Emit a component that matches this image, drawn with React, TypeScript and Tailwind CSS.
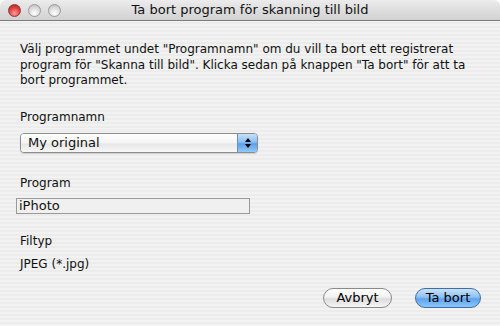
import React from 'react'

const font = { fontFamily: '"DejaVu Sans", "Liberation Sans", sans-serif' }

function Light({ red }: { red?: boolean }) {
  return (
    <span
      className={`w-[13px] h-[13px] rounded-full border ${
        red
          ? 'border-[#8a3a3a] bg-[radial-gradient(circle_at_50%_75%,#ff9a9a_0%,#e0403f_55%,#a31c1c_100%)]'
          : 'border-[#9a9a9a] bg-[radial-gradient(circle_at_50%_75%,#ffffff_0%,#dcdcdc_55%,#b4b4b4_100%)]'
      }`}
    />
  )
}

function AquaButton({ label, primary }: { label: string; primary?: boolean }) {
  return (
    <button
      className={`h-[20px] rounded-full border text-[13px] leading-none text-black flex items-center justify-center ${
        primary
          ? 'w-[66px] border-[#3f6da8] bg-[linear-gradient(#c8e2fb_0%,#8fc1f5_45%,#5fa2ec_55%,#8cc6fb_100%)]'
          : 'w-[69px] border-[#8a8a8a] bg-[linear-gradient(#ffffff_0%,#f2f2f2_45%,#dcdcdc_55%,#f6f6f6_100%)]'
      }`}
    >
      {label}
    </button>
  )
}

export default function App() {
  return (
    <div className="w-[500px] h-[326px] bg-white text-black overflow-hidden" style={font}>
      <div className="w-full h-full flex flex-col rounded-t-[6px] overflow-hidden">
        {/* Title bar */}
        <div className="relative h-[21px] flex items-center px-[8px] bg-[linear-gradient(#ececec_0%,#dedede_50%,#d2d2d2_100%)] border-b border-[#7a7a7a]">
          <div className="flex items-center gap-[7px]">
            <Light red />
            <Light />
            <Light />
          </div>
          <div className="absolute inset-0 flex items-center justify-center text-[13px] text-[#111]">
            Ta bort program för skanning till bild
          </div>
        </div>

        {/* Body */}
        <div className="flex-1 flex flex-col bg-[repeating-linear-gradient(180deg,#ececec_0px,#ececec_2px,#f2f2f2_2px,#f2f2f2_4px)] border-t border-[#f4f4f4] px-[20px] text-[12px] text-[#111]">
          <p className="mt-[20px] leading-[15.5px] w-[455px]">
            Välj programmet undet "Programnamn" om du vill ta bort ett registrerat program för "Skanna till bild". Klicka sedan på knappen "Ta bort" för att ta bort programmet.
          </p>

          <div className="mt-[21px] leading-[15px]">Programnamn</div>
          <div className="mt-[8px] w-[238px] h-[20px] flex rounded-[4px] border border-[#8c8c8c] overflow-hidden shadow-[0_1px_1px_rgba(0,0,0,0.15)]">
            <div className="flex-1 flex items-center pl-[7px] text-[13px] bg-[linear-gradient(#ffffff_0%,#f4f4f4_50%,#e6e6e6_55%,#f8f8f8_100%)]">
              My original
            </div>
            <div className="w-[20px] flex flex-col items-center justify-center gap-[2px] border-l border-[#6d8fbf] bg-[linear-gradient(#c6e0fb_0%,#8dbff4_45%,#5b9fea_55%,#94c9fb_100%)]">
              <span className="w-0 h-0 border-l-[3px] border-r-[3px] border-b-[4px] border-l-transparent border-r-transparent border-b-black" />
              <span className="w-0 h-0 border-l-[3px] border-r-[3px] border-t-[4px] border-l-transparent border-r-transparent border-t-black" />
            </div>
          </div>

          <div className="mt-[23px] leading-[15px]">Program</div>
          <div className="mt-[7px] -ml-[4px] w-[234px] h-[16px] border border-[#9a9a9a] bg-[#f0f0f0] flex items-center pl-[2px] text-[13px]">
            iPhoto
          </div>

          <div className="mt-[20px] leading-[15px]">Filtyp</div>
          <div className="mt-[8px] leading-[15px]">JPEG (*.jpg)</div>

          <div className="mt-[16px] flex justify-end gap-[23px] mr-[-1px]">
            <AquaButton label="Avbryt" />
            <AquaButton label="Ta bort" primary />
          </div>
        </div>
      </div>
    </div>
  )
}
